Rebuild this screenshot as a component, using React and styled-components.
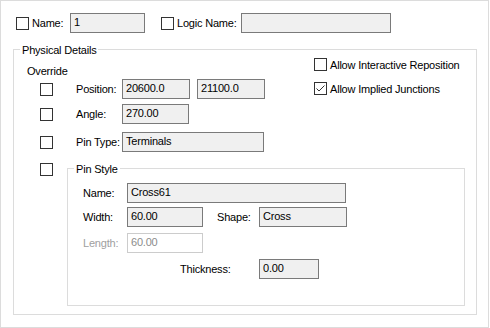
import React from 'react';
import styled, { createGlobalStyle } from 'styled-components';

const GlobalStyle = createGlobalStyle`
  html, body {
    margin: 0;
    padding: 0;
    background: #ffffff;
  }
  body {
    font-family: 'Liberation Sans', Arial, sans-serif;
    font-size: 11px;
    letter-spacing: -0.2px;
    color: #000;
  }
`;

// --- Building blocks ---

const Window = styled.div`
  box-sizing: border-box;
  width: 489px;
  height: 328px;
  border: 1px solid #dcdcdc;
  padding: 12px 11px 0 12px;
  background: #fff;
`;

const Row = styled.div`
  display: flex;
  align-items: center;
  height: ${p => p.$h || 20}px;
  margin-top: ${p => p.$mt || 0}px;
  padding-left: ${p => p.$pl || 0}px;
`;

const Box = styled.span`
  box-sizing: border-box;
  flex: 0 0 auto;
  display: inline-flex;
  align-items: center;
  justify-content: center;
  width: 13px;
  height: 13px;
  border: 1px solid #333;
  background: #fff;
  margin-left: ${p => p.$ml || 0}px;
  margin-right: ${p => p.$mr || 0}px;
`;

const Label = styled.span`
  flex: 0 0 auto;
  width: ${p => (p.$w ? `${p.$w}px` : 'auto')};
  margin-left: ${p => p.$ml || 0}px;
  line-height: 14px;
  white-space: nowrap;
  color: ${p => (p.$disabled ? '#a0a0a0' : '#000')};
`;

const Field = styled.div`
  box-sizing: border-box;
  flex: 0 0 auto;
  width: ${p => p.$w}px;
  height: 20px;
  margin-left: ${p => p.$ml || 0}px;
  padding: 0 3px;
  line-height: 17px;
  border: 1px solid ${p => (p.$disabled ? '#cccccc' : '#7a7a7a')};
  background: ${p => (p.$disabled ? '#ffffff' : '#f0f0f0')};
  color: ${p => (p.$disabled ? '#8c8c8c' : '#000')};
  white-space: nowrap;
  overflow: hidden;
`;

const Group = styled.fieldset`
  box-sizing: border-box;
  margin: ${p => p.$mt || 0}px 0 0 0;
  padding: 0;
  border: 1px solid #dcdcdc;
  width: ${p => p.$w}px;
  height: ${p => p.$h}px;
  min-width: 0;
`;

const Legend = styled.legend`
  margin-left: 6px;
  padding: 2px 2px 0 2px;
  line-height: 14px;
  white-space: nowrap;
`;

const Inner = styled.div`
  padding-left: ${p => p.$pl || 0}px;
`;

const TopSection = styled.div`
  display: flex;
`;

const LeftCol = styled.div`
  flex: 0 0 287px;
`;

const RightCol = styled.div`
  display: flex;
  flex-direction: column;
  gap: 11px;
  margin-top: 1px;
`;

const Option = styled.div`
  display: flex;
  align-items: center;
  height: 13px;
`;

const Heading = styled.div`
  margin-top: 7px;
  line-height: 14px;
`;

const CheckCell = styled.div`
  flex: 0 0 ${p => p.$w}px;
  display: flex;
  align-items: ${p => p.$top ? 'flex-start' : 'center'};
  padding-top: ${p => p.$pt || 0}px;
  align-self: stretch;
`;

const PinRow = styled.div`
  display: flex;
  margin-top: 8px;
`;

const Check = ({ checked, ml, mr }) => (
  <Box $ml={ml} $mr={mr}>
    {checked && (
      <svg width="11" height="11" viewBox="0 0 11 11">
        <path d="M1.5 5.5 L4 8 L9.5 2.5" fill="none" stroke="#333" strokeWidth="1" />
      </svg>
    )}
  </Box>
);

const App = () => (
  <>
    <GlobalStyle />
    <Window>
      <Row $pl={3}>
        <Check mr={3} />
        <Label $w={38}>Name:</Label>
        <Field $w={75}>1</Field>
        <Check ml={16} mr={3} />
        <Label $w={64}>Logic Name:</Label>
        <Field $w={150} />
      </Row>

      <Group $mt={8} $w={464} $h={274}>
        <Legend>Physical Details</Legend>
        <Inner $pl={13}>
          <TopSection>
            <LeftCol>
              <Heading>Override</Heading>
              <Row $mt={1}>
                <CheckCell $w={49}><Check ml={13} /></CheckCell>
                <Label $w={46}>Position:</Label>
                <Field $w={68}>20600.0</Field>
                <Field $w={68} $ml={7}>21100.0</Field>
              </Row>
              <Row $mt={5}>
                <CheckCell $w={49}><Check ml={13} /></CheckCell>
                <Label $w={46}>Angle:</Label>
                <Field $w={67}>270.00</Field>
              </Row>
            </LeftCol>
            <RightCol>
              <Option>
                <Check mr={3} />
                <Label>Allow Interactive Reposition</Label>
              </Option>
              <Option>
                <Check checked mr={3} />
                <Label>Allow Implied Junctions</Label>
              </Option>
            </RightCol>
          </TopSection>

          <Row $mt={8}>
            <CheckCell $w={49}><Check ml={13} /></CheckCell>
            <Label $w={46}>Pin Type:</Label>
            <Field $w={142}>Terminals</Field>
          </Row>

          <PinRow>
            <CheckCell $w={40} $top $pt={3}><Check ml={13} /></CheckCell>
            <Group $w={398} $h={146}>
              <Legend>Pin Style</Legend>
              <Inner $pl={15}>
                <Row $mt={7}>
                  <Label $w={44}>Name:</Label>
                  <Field $w={219}>Cross61</Field>
                </Row>
                <Row $mt={4}>
                  <Label $w={44}>Width:</Label>
                  <Field $w={76}>60.00</Field>
                  <Label $w={42} $ml={14}>Shape:</Label>
                  <Field $w={88}>Cross</Field>
                </Row>
                <Row $mt={6}>
                  <Label $w={44} $disabled>Length:</Label>
                  <Field $w={76} $disabled>60.00</Field>
                </Row>
                <Row $mt={6}>
                  <Label $w={79} $ml={97}>Thickness:</Label>
                  <Field $w={60}>0.00</Field>
                </Row>
              </Inner>
            </Group>
          </PinRow>
        </Inner>
      </Group>
    </Window>
  </>
);

export default App;
